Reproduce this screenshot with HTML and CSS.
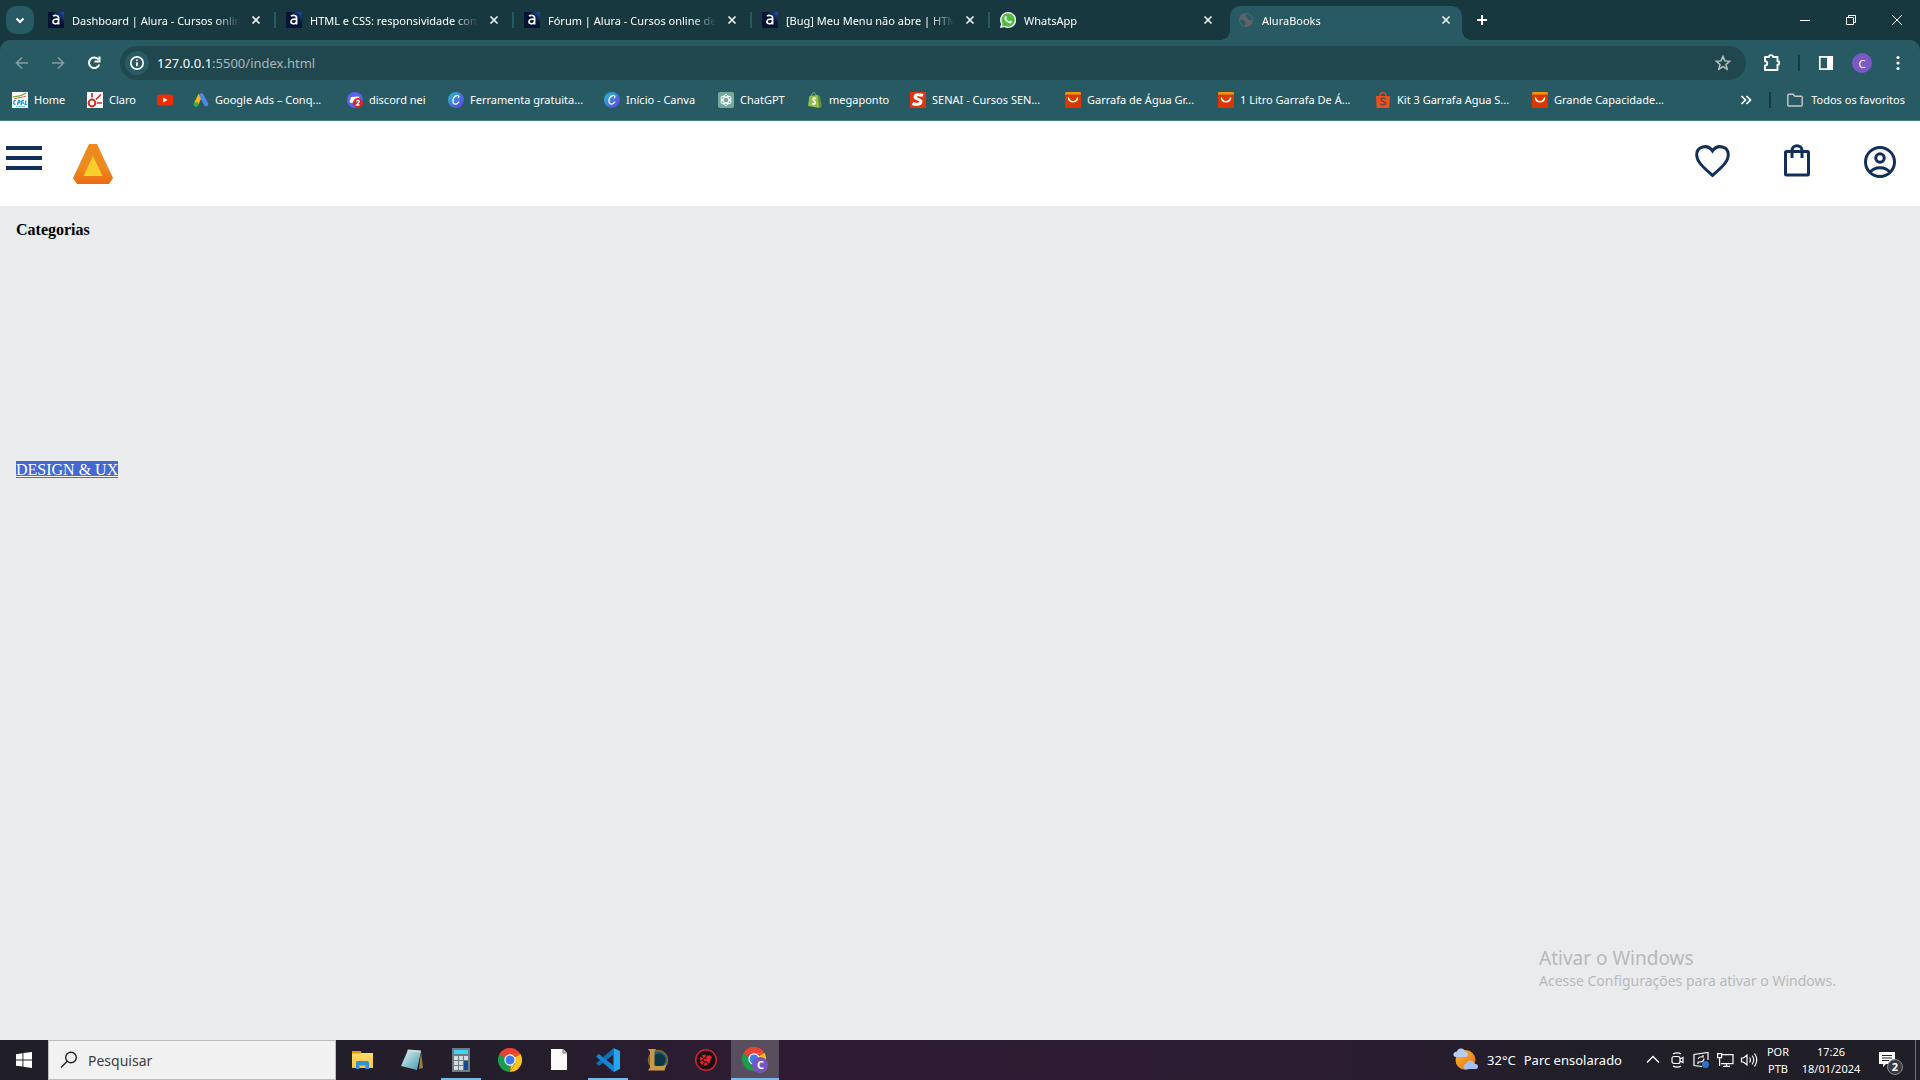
FILE: index.html
```html
<!DOCTYPE html>
<html lang="pt-BR">
<head>
<meta charset="utf-8">
<title>AluraBooks</title>
<link rel="stylesheet" href="styles.css">
</head>
<body>
<svg class="defs" aria-hidden="true">
  <defs>
    <linearGradient id="g-alura" x1="0" y1="1" x2="1" y2="0"><stop offset=".6" stop-color="#051433"/><stop offset="1" stop-color="#2450a8"/></linearGradient>
    <linearGradient id="g-canva" x1="0" y1="0" x2="1" y2="1"><stop offset="0" stop-color="#1fc3cc"/><stop offset="1" stop-color="#6a35ea"/></linearGradient>
    <linearGradient id="g-logo" x1="0" y1="0" x2="0" y2="1"><stop offset=".6" stop-color="#ee8a1d"/><stop offset="1" stop-color="#ea6a14"/></linearGradient>
    <linearGradient id="g-folder" x1="0" y1="0" x2="0" y2="1"><stop offset="0" stop-color="#ffe07a"/><stop offset="1" stop-color="#fbc43c"/></linearGradient>
    <linearGradient id="g-note" x1="0" y1="0" x2="1" y2="1"><stop offset="0" stop-color="#e8f6f8"/><stop offset="1" stop-color="#3f98ab"/></linearGradient>
    <linearGradient id="g-sun" x1="0" y1="0" x2="1" y2="1"><stop offset="0" stop-color="#fbbf24"/><stop offset="1" stop-color="#e8661b"/></linearGradient>
  </defs>
  <symbol id="i-alura" viewBox="0 0 16 16"><path d="M0 0h16v16H0z" fill="url(#g-alura)"/><path d="M5 4.200C6.500 3 10.600 3 10.600 6v6.600M10.400 7.400C7 6.700 5 7.700 5 9.800c0 2.600 4.500 2.600 5.400.2" fill="none" stroke="#fff" stroke-width="1.700"/></symbol>
  <symbol id="i-whats" viewBox="0 0 16 16"><path d="M8 0a8 8 0 1 1-3.700 15L0 16l1.100-4A8 8 0 0 1 8 0z" fill="#fff"/><path d="M8 1.300a6.700 6.700 0 1 1-3.400 12.400l-2.700.6.700-2.600A6.700 6.700 0 0 1 8 1.300z" fill="#4dbd3f"/><path d="M5.200 4.200c.8-.6 1.200 0 1.700 1.500L6.300 6.700c.7 1.300 1.600 2.100 2.900 2.700l1-.9c1.500.6 2 .9 1.700 1.600-.8 2-3.300 1.500-5.300-.3C4.600 8 3.600 5.600 5.200 4.200z" fill="#fff"/></symbol>
  <symbol id="i-globe" viewBox="0 0 16 16"><circle cx="8" cy="8" r="7" fill="#5f6368"/><path d="M2 8c3-.5 4 .5 5 1.500 1 1 1 1 .5 2L7 14c-3-.4-5-3-5-6zM8 2c-1 1.500-.5 2.500.5 3C10 5.500 9 7 10.500 8H14c0-3-2.500-6-6-6z" fill="#285a63"/></symbol>
  <symbol id="i-x" viewBox="0 0 16 16"><path d="M4.500 4.500l7 7m0-7l-7 7" stroke="#eef4f4" stroke-width="1.700"/></symbol>
  <symbol id="i-ali" viewBox="0 0 16 16"><rect width="16" height="16" rx="1.500" fill="#d93900"/><path d="M0 2.500V1.500A1.500 1.500 0 0 1 1.500 0h13A1.500 1.500 0 0 1 16 1.500V2.500z" fill="#f09a00"/><path d="M3.500 6c1 5 8 5 9 0" fill="none" stroke="#fff" stroke-width="1.500" stroke-linecap="round"/></symbol>
  <symbol id="i-canva" viewBox="0 0 16 16"><circle cx="8" cy="8" r="8" fill="url(#g-canva)"/><path d="M10.500 5.800c.9-1.600-.3-2.600-1.600-2.300C6 4 4 7.700 5.200 10.600c1 2.400 4 2 5.500-.6" fill="none" stroke="#fff" stroke-width="1.300" stroke-linecap="round"/></symbol>
  <symbol id="i-chrome" viewBox="0 0 24 24"><path d="M12 12 1.600 6a12 12 0 0 1 20.800 0z" fill="#ea4335"/><path d="M12 12 1.600 6A12 12 0 0 0 12 24z" fill="#1d9a4c"/><path d="M12 12 22.400 6A12 12 0 0 1 12 24l5.200-9z" fill="#fcc31e"/><path d="M12 6.500h10.600L22.400 6H12zM12 24l5-9-4.500 2.500z" fill="#fcc31e"/><path d="M1.600 6l5.600 9.400L12 17.500V12z" fill="#1d9a4c"/><path d="M1.600 6A12 12 0 0 1 22.400 6.600H12L7 10z" fill="#ea4335"/><circle cx="12" cy="12" r="5.700" fill="#fff"/><circle cx="12" cy="12" r="4.500" fill="#3b7ded"/></symbol>
</svg>

<header class="chrome">
  <div class="tabstrip">
    <button class="tab-search" aria-label="Pesquisar guias"><svg width="28" height="28" fill="none" stroke="#fff" stroke-width="2"><path d="M10.500 12.500l3.500 3.500 3.500-3.500"/></svg></button>
    <nav class="tabs">
      <div class="tab"><svg class="fav"><use href="#i-alura"/></svg><span class="tab-title">Dashboard | Alura - Cursos online de tecnologia</span><button class="tab-close" aria-label="Fechar"><svg class="fav"><use href="#i-x"/></svg></button></div>
      <div class="tab"><svg class="fav"><use href="#i-alura"/></svg><span class="tab-title">HTML e CSS: responsividade com mobile-first</span><button class="tab-close" aria-label="Fechar"><svg class="fav"><use href="#i-x"/></svg></button></div>
      <div class="tab"><svg class="fav"><use href="#i-alura"/></svg><span class="tab-title">Fórum | Alura - Cursos online de tecnologia</span><button class="tab-close" aria-label="Fechar"><svg class="fav"><use href="#i-x"/></svg></button></div>
      <div class="tab"><svg class="fav"><use href="#i-alura"/></svg><span class="tab-title">[Bug] Meu Menu não abre | HTML e CSS</span><button class="tab-close" aria-label="Fechar"><svg class="fav"><use href="#i-x"/></svg></button></div>
      <div class="tab tab-last"><svg class="fav"><use href="#i-whats"/></svg><span class="tab-title">WhatsApp</span><button class="tab-close" aria-label="Fechar"><svg class="fav"><use href="#i-x"/></svg></button></div>
      <div class="tab tab-active"><svg class="fav"><use href="#i-globe"/></svg><span class="tab-title">AluraBooks</span><button class="tab-close" aria-label="Fechar"><svg class="fav"><use href="#i-x"/></svg></button></div>
    </nav>
    <button class="new-tab" aria-label="Nova guia"><svg width="12" height="12" stroke="#fff" stroke-width="2"><path d="M6 1v10M1 6h10"/></svg></button>
    <div class="window-controls">
      <button aria-label="Minimizar"><svg width="12" height="12" stroke="#fff"><path d="M1 6.500h10"/></svg></button>
      <button aria-label="Restaurar"><svg width="12" height="12" fill="none" stroke="#fff"><path d="M1.500 3.500h7v7h-7zM3.500 3.500v-2h7v7h-2"/></svg></button>
      <button aria-label="Fechar janela"><svg width="12" height="12" stroke="#fff"><path d="M1 1l10 10M11 1L1 11"/></svg></button>
    </div>
  </div>

  <div class="toolbar">
    <button class="nav-btn dim" aria-label="Voltar"><svg width="16" height="16" fill="none" stroke="currentColor" stroke-width="1.700"><path d="M14 8H3M8 2.500L2.500 8 8 13.500"/></svg></button>
    <button class="nav-btn dim" aria-label="Avançar"><svg width="16" height="16" fill="none" stroke="currentColor" stroke-width="1.700"><path d="M2 8h11M8 2.500L13.500 8 8 13.500"/></svg></button>
    <button class="nav-btn" aria-label="Recarregar"><svg width="16" height="16" fill="none" stroke="currentColor" stroke-width="2"><path d="M12.500 4.500A5.300 5.300 0 1 0 13.300 9.500M13.500 1.500v5h-5"/></svg></button>
    <div class="omnibox">
      <button class="site-info" aria-label="Informações do site"><svg width="16" height="16" fill="none" stroke="#fff" stroke-width="1.700"><circle cx="8" cy="8" r="6.200"/><path d="M8 7.200v4M8 4.500v1.600"/></svg></button>
      <span class="url"><b>127.0.0.1</b>:5500/index.html</span>
      <button class="star" aria-label="Favoritar"><svg width="18" height="18" fill="none" stroke="#b9c4c6" stroke-width="1.500"><path d="M9 2.500l1.900 4.400 4.700.4-3.600 3.100 1.100 4.700L9 12.600l-4.100 2.500L6 10.400 2.400 7.300l4.700-.4z"/></svg></button>
    </div>
    <div class="actions">
      <button aria-label="Extensões"><svg width="16" height="20" viewBox="2 0 16 20" fill="none" stroke="#fff" stroke-width="1.900"><path d="M3 4h4c0-2.500 4-2.500 4 0h4.500v4.200c2.500 0 2.500 3.600 0 3.600V17H3v-4.500c3 0 3-4.200 0-4.200z" stroke-linejoin="round"/></svg></button>
      <i class="divider"></i>
      <button aria-label="Painel lateral"><svg width="16" height="16"><path d="M1.800 1.800h12.400v12.400H1.800z" fill="none" stroke="#fff" stroke-width="1.700"/><path d="M9 2h5v12H9z" fill="#fff"/></svg></button>
      <button class="avatar" aria-label="Perfil">C</button>
      <button class="more" aria-label="Menu"><svg width="4" height="16" fill="#fff"><circle cx="2" cy="2.500" r="1.600"/><circle cx="2" cy="8" r="1.600"/><circle cx="2" cy="13.500" r="1.600"/></svg></button>
    </div>
  </div>

  <div class="bookmarks">
    <nav class="bookmark-list">
      <a href="#"><svg class="fav" viewBox="0 0 16 16"><path d="M0 0h16v16H0z" fill="#fff"/><path d="M1 5c5-1 9-1 13-4" stroke="#7ab648" stroke-width="1.500" fill="none"/><path d="M2 7c5-2 8-1 12-3" stroke="#e8632b" fill="none"/><path d="M4 8.500C1 8 1 12.500 3.500 12.500M5.500 13l1-4.500c2.500-.5 2 2.500-.5 2.500M9 13l1-4.500h2M9.500 11H12M14 8.500l-1 4h2" stroke="#1b9bd8" stroke-width="1.300" fill="none"/><path d="M4 14.700h9" stroke="#69bfe8"/></svg><span>Home</span></a>
      <a href="#"><svg class="fav" viewBox="0 0 16 16"><path d="M0 0h16v16H0z" fill="#fff"/><g stroke="#d52b1e" fill="none" stroke-width="1.700"><circle cx="5" cy="11" r="3.400" stroke-width="2"/><path d="M5 1v4.500M9 7.500L14 2.500M10 11h5"/></g></svg><span>Claro</span></a>
      <a href="#" aria-label="YouTube"><svg class="fav" viewBox="0 0 16 16"><rect y="2.500" width="16" height="11" rx="2.500" fill="#f02d00"/><path d="M6.200 5.500v5l4.300-2.500z" fill="#fff"/></svg></a>
      <a href="#"><svg class="fav" viewBox="0 0 16 16"><path d="M7.500 3L3 12" stroke="#fbbc04" stroke-width="4.500"/><path d="M8.500 3.500L13 12" stroke="#4f86ec" stroke-width="4.500" stroke-linecap="round"/><circle cx="3" cy="12.500" r="2.400" fill="#3fa653"/></svg><span>Google Ads – Conq...</span></a>
      <a href="#"><svg class="fav" viewBox="0 0 16 16"><circle cx="8" cy="8" r="8" fill="#5865f2"/><path d="M4 5l8-.5 1.500 6L10 9l-2 1-4 1-1.500-1z" fill="#fff"/><circle cx="11" cy="11" r="5" fill="#d22525"/><path d="M9.500 9.500c.5-1.800 3.200-1.200 2.700.5L9.500 13h3" stroke="#fff" stroke-width="1.300" fill="none"/></svg><span>discord nei</span></a>
      <a href="#"><svg class="fav"><use href="#i-canva"/></svg><span>Ferramenta gratuita...</span></a>
      <a href="#"><svg class="fav"><use href="#i-canva"/></svg><span>Início - Canva</span></a>
      <a href="#"><svg class="fav" viewBox="0 0 16 16"><rect width="16" height="16" rx="2" fill="#75a99c"/><g fill="none" stroke="#fff" stroke-width=".9"><ellipse cx="8" cy="8" rx="2.700" ry="5.500"/><ellipse cx="8" cy="8" rx="2.700" ry="5.500" transform="rotate(60 8 8)"/><ellipse cx="8" cy="8" rx="2.700" ry="5.500" transform="rotate(120 8 8)"/></g></svg><span>ChatGPT</span></a>
      <a href="#"><svg class="fav" viewBox="0 0 16 16"><path d="M2.500 4L11 3l1.500 13L1 14z" fill="#95bf47"/><path d="M11 3l2 1.200L15 15l-3 1z" fill="#5e8e3e"/><path d="M4.500 4c.5-4.500 4-4 4.500-.5" fill="none" stroke="#95bf47"/><path d="M9 6.500c-2-1-3.500.5-2.500 1.700C8 9.500 9 9.700 8 11.500c-.8 1-2.500.5-3 0" stroke="#fff" stroke-width="1.600" fill="none"/></svg><span>megaponto</span></a>
      <a href="#"><svg class="fav" viewBox="0 0 16 16"><path d="M0 0h16v16H0z" fill="#e8320b"/><path d="M13 3.500C9 2 5 2.500 5 5c0 2.500 6.500 2 6 5-.3 2.500-5 3-8.500 1.500" stroke="#fff" stroke-width="3" fill="none"/></svg><span>SENAI - Cursos SEN...</span></a>
      <a href="#"><svg class="fav"><use href="#i-ali"/></svg><span>Garrafa de Água Gr...</span></a>
      <a href="#"><svg class="fav"><use href="#i-ali"/></svg><span>1 Litro Garrafa De Á...</span></a>
      <a href="#"><svg class="fav" viewBox="0 0 16 16"><path d="M1 4h14l-.7 12H1.700z" fill="#ea501f"/><path d="M5 4c0-4.500 6-4.500 6 0" fill="none" stroke="#ea501f" stroke-width="1.200"/><path d="M10.500 7c-2-1.500-4.500-1-4.500.8 0 2 4.500 1.500 4.500 3.500 0 2-3 2-5 .7" stroke="#574a43" stroke-width="1.400" fill="none"/></svg><span>Kit 3 Garrafa Agua S...</span></a>
      <a href="#"><svg class="fav"><use href="#i-ali"/></svg><span>Grande Capacidade...</span></a>
    </nav>
    <button class="overflow" aria-label="Mais favoritos"><svg width="12" height="12" fill="none" stroke="#fff" stroke-width="1.700"><path d="M1.500 2l4 4-4 4M6.500 2l4 4-4 4"/></svg></button>
    <i class="divider"></i>
    <a class="all-bookmarks" href="#"><svg class="fav" viewBox="0 0 16 16" fill="none" stroke="#c5c9ca" stroke-width="1.400"><path d="M.8 13V3.200q0-1 1-1H6l2 2h6.200q1 0 1 1V13q0 1-1 1H1.800q-1 0-1-1z"/></svg><span>Todos os favoritos</span></a>
  </div>
</header>

<div class="site">
  <header class="site-header">
    <button class="burger" aria-label="Menu"><span></span><span></span><span></span></button>
    <a class="logo" href="#" aria-label="AluraBooks"><svg width="40" height="40"><path d="M16 0h8l16 34-4 6H4l-4-6z" fill="url(#g-logo)"/><path d="M20 12l9.500 20h-19z" fill="#f8cf2b"/></svg></a>
    <nav class="site-nav">
      <a href="#" aria-label="Favoritos"><svg width="36" height="36" viewBox="0 1 36 36" fill="none" stroke="#123057" stroke-width="3"><path d="M18.500 32.500C9.500 24.500 2.700 19 2.700 11.500 2.700 3.500 13.500.5 18.500 8 23.500.5 34.300 3.500 34.300 11.500 34.300 19 27.500 24.500 18.500 32.500z"/></svg></a>
      <a href="#" aria-label="Sacola"><svg width="36" height="36" viewBox="-1 1 36 36" fill="none" stroke="#123057" stroke-width="3"><rect x="6.500" y="8.500" width="23" height="23.500" rx="1"/><path d="M13 15V7.500c0-6.500 10-6.500 10 0V15"/></svg></a>
      <a href="#" aria-label="Perfil"><svg width="36" height="36" viewBox="0 1 36 36" fill="none" stroke="#123057" stroke-width="3"><circle cx="18" cy="19" r="14.500"/><circle cx="18" cy="15" r="4.200"/><path d="M8 29.500c4-6.500 16-6.500 20 0"/></svg></a>
    </nav>
  </header>
  <main class="menu">
    <h1>Categorias</h1>
    <a href="#">DESIGN &amp; UX</a>
  </main>
  <aside class="watermark"><strong>Ativar o Windows</strong><span>Acesse Configurações para ativar o Windows.</span></aside>
</div>

<footer class="taskbar">
  <button class="start" aria-label="Iniciar"><svg width="16" height="16" fill="#fff"><path d="M0 2.200L6.500 1.300v6.200H0zM7.400 1.100L16 0v7.500H7.400zM0 8.400h6.500v6.200L0 13.800zM7.400 8.400H16V16l-8.600-1.200z"/></svg></button>
  <label class="search"><svg width="18" height="18" fill="none" stroke="#222" stroke-width="1.400"><circle cx="11" cy="6.500" r="5.300"/><path d="M7 10.500L1 16.500"/></svg><input type="text" placeholder="Pesquisar" aria-label="Pesquisar"></label>
  <nav class="apps">
    <button class="app" aria-label="Explorador"><svg width="24" height="24"><path d="M1 3h8l1.500 2H22v15H1z" fill="url(#g-folder)"/><path d="M1 3h9v2.500H1z" fill="#e39b0b"/><path d="M5 21v-6.500q0-1.500 1.500-1.500h10q1.500 0 1.500 1.500V21h-3.500v-3.500h-6V21z" fill="#3293d8"/></svg></button>
    <button class="app" aria-label="Bloco de notas"><svg width="24" height="24"><path d="M21 3l2 17-4 1z" fill="#9b7a3f"/><path d="M8 2l13 1-4 19-16-4z" fill="url(#g-note)"/><path d="M8 1.500l13 1-.5 2-13.500-1z" fill="#d5dadb"/></svg></button>
    <button class="app app-open" aria-label="Calculadora"><svg width="24" height="24"><path d="M3 0h18v24H3z" fill="#6f7b83"/><path d="M5 2h14v4H5z" fill="#41d2f4"/><path d="M5 8h4v4H5zM10 8h4v4h-4zM15 8h4v4h-4zM5 13h4v4H5zM10 13h4v4h-4zM5 18h4v4H5zM10 18h4v4h-4z" fill="#d6dcde"/><path d="M15 13h4v9h-4z" fill="#114b91"/></svg></button>
    <button class="app" aria-label="Chrome"><svg width="24" height="24"><use href="#i-chrome"/></svg></button>
    <button class="app" aria-label="Documento"><svg width="24" height="24"><path d="M4 1h12l4 4v17H4z" fill="#fafafa"/><path d="M16 1v4h4" fill="#ccc" stroke="#777"/></svg></button>
    <button class="app app-open" aria-label="VS Code"><svg width="24" height="24"><path d="M17.500 0L24 3v18l-6.500 3z" fill="#25a5f0"/><path d="M18 6L3 18 0 15.500 17.500 0z" fill="#0d6fb8"/><path d="M18 18L3 6 0 8.500 17.500 24z" fill="#1686cf"/></svg></button>
    <button class="app" aria-label="League of Legends"><svg width="24" height="24"><circle cx="13" cy="12" r="9.500" fill="#10657a" stroke="#8d6a2d" stroke-width="1.500"/><circle cx="14" cy="12" r="6.500" fill="#0e3542"/><path d="M3 1h8l-1.500 2.500V18h9l3-2-2 6.500H3l2-3V4z" fill="#c9994a"/></svg></button>
    <button class="app" aria-label="Jogo"><svg width="24" height="24"><circle cx="12" cy="12" r="10.300" fill="#171014" stroke="#d2222d" stroke-width="1.500"/><circle cx="11" cy="12" r="4" fill="none" stroke="#e5242e" stroke-width="3" stroke-dasharray="3 1"/><path d="M11 12l5-5 2 2-4 5z" fill="#e5242e"/><circle cx="11" cy="12" r="1.500" fill="#e5242e"/></svg></button>
    <button class="app app-open app-current" aria-label="Chrome, perfil C"><svg width="26" height="26"><use href="#i-chrome" width="24" height="24"/><circle cx="18" cy="18" r="8" fill="#7854bd"/></svg><span class="app-badge">C</span></button>
  </nav>
  <div class="tray">
    <button class="weather"><svg width="26" height="24"><circle cx="12.500" cy="12" r="10" fill="url(#g-sun)"/><path d="M3 9q-3-.5-2.500-3T4 3.500Q5 0 8.500.5T12 4q3 0 3 2.500T12 9z" fill="#b5cdf5"/><path d="M13 21q-3-.5-2.500-3t3-2.500q1-3 4-3t4 3.500q3.500-.5 3.500 2.500T22 21z" fill="#a2c1f2"/></svg><span>32°C</span><span>Parc ensolarado</span></button>
    <div class="tray-icons">
      <button aria-label="Mostrar ícones"><svg width="16" height="16" fill="none" stroke="#fff" stroke-width="1.300"><path d="M2 10.500l6-6 6 6"/></svg></button>
      <button aria-label="Reunir agora"><svg width="16" height="16" fill="none" stroke="#fff" stroke-width="1.200"><rect x="3" y="4.500" width="8" height="7" rx="2"/><path d="M11 7l3-1.500v5L11 9M4 2q4-2.200 8 0M4 14q4 2.200 8 0"/></svg></button>
      <button aria-label="Atualização"><svg width="18" height="18" fill="none" stroke="#fff" stroke-width="1.200"><path d="M10 15.500L2 14.500V3.500L16 1.500V9M6 8q1-3 5-2V4M12 7.500q0 3-4 3.500H6v2"/><circle cx="13.500" cy="13.500" r="3.600" fill="#2b74c7" stroke="none"/></svg></button>
      <button aria-label="Rede"><svg width="18" height="16" fill="none" stroke="#fff" stroke-width="1.200"><path d="M5 2.600h12v9H5M1.600 1.600h4v4h-4zM3.600 6v8M7 14.400h7M10.500 12v2"/></svg></button>
      <button aria-label="Volume"><svg width="18" height="16" fill="none" stroke="#fff" stroke-width="1.200"><path d="M1.500 6v4h2l3.500 3V3L3.500 6zM9.500 5.500q2 2.500 0 5M12 3.500q3.500 4.500 0 9M14.500 1.500q4.500 6.500 0 13"/></svg></button>
    </div>
    <button class="stack language"><span>POR</span><span>PTB</span></button>
    <button class="stack clock"><span>17:26</span><span>18/01/2024</span></button>
    <button class="notifications" aria-label="Notificações"><svg width="18" height="18"><path d="M1 1h16v12H8l-3 3v-3H1z" fill="#fff"/><path d="M4 4.500h10M4 7h10M4 9.500h7" stroke="#211f27" stroke-width="1.200"/></svg><span class="count">2</span></button>
  </div>
</footer>
</body>
</html>
```
FILE: styles.css
```css
* { box-sizing: border-box; }

body {
  margin: 0;
  min-height: 100vh;
  display: flex;
  flex-direction: column;
  font-family: "Noto Sans", "Open Sans", sans-serif;
  font-size: 11px;
  color: #fff;
}

button {
  padding: 0;
  border: 0;
  background: none;
  color: inherit;
  font: inherit;
  display: flex;
  align-items: center;
  justify-content: center;
}

a { color: inherit; }
svg { display: block; flex: none; }
.defs { position: absolute; width: 0; height: 0; }
.fav { width: 16px; height: 16px; }
.divider { width: 2px; height: 16px; background: #18383f; }

/* Tab strip */
.chrome { background: #18383f; border-bottom: 1px solid #4c8089; }
.tabstrip { display: flex; height: 40px; }
.tab-search {
  width: 28px;
  height: 28px;
  margin: 6px 3px 6px 6px;
  border-radius: 10px;
  background: #285a63;
}
.tabs { display: flex; flex: 0 1 1428px; min-width: 0; }
.tab {
  position: relative;
  flex: 1 1 0;
  min-width: 0;
  display: flex;
  align-items: center;
  gap: 8px;
  padding: 0 11px;
}
.tab::after {
  content: "";
  position: absolute;
  right: -1px;
  top: 12px;
  width: 2px;
  height: 16px;
  background: #285a63;
}
.tab-last::after { display: none; }
.tab-title {
  flex: 1;
  overflow: hidden;
  white-space: nowrap;
  mask-image: linear-gradient(to right, #000 calc(100% - 24px), transparent);
}
.tab-active { z-index: 1; }
.tab-active::before {
  content: "";
  position: absolute;
  z-index: -1;
  inset: 6px 3px 0;
  border-radius: 10px 10px 0 0;
  background: #285a63;
}
.tab-active::after {
  z-index: -1;
  left: -7px;
  right: -7px;
  top: 30px;
  width: auto;
  height: 10px;
  background:
    radial-gradient(circle at 0 0, transparent 10px, #285a63 10px) left / 10px 10px no-repeat,
    radial-gradient(circle at 100% 0, transparent 10px, #285a63 10px) right / 10px 10px no-repeat;
}
.new-tab { width: 34px; }
.window-controls { display: flex; margin-left: auto; }
.window-controls button { width: 46px; }

/* Toolbar */
.toolbar {
  display: flex;
  align-items: center;
  padding: 6px 14px 0 4px;
  background: #285a63;
  border-radius: 10px 10px 0 0;
}
.nav-btn { width: 36px; height: 34px; }
.nav-btn.dim { color: #7f9da2; }
.omnibox {
  flex: 1;
  display: flex;
  align-items: center;
  height: 34px;
  margin-left: 8px;
  padding: 0 14px 0 5px;
  border-radius: 17px;
  background: #21474e;
}
.site-info { width: 24px; height: 24px; border-radius: 50%; background: #285a63; }
.url { flex: 1; margin-left: 8px; font-size: 13px; color: #a5b7ba; }
.url b { font-weight: 400; color: #fff; }
.actions { display: flex; align-items: center; gap: 18px; padding-left: 18px; }
.avatar {
  width: 20px;
  height: 20px;
  border-radius: 50%;
  background: #7b59c4;
}
.more { width: 16px; }

/* Bookmarks bar */
.bookmarks {
  display: flex;
  align-items: center;
  height: 40px;
  padding: 0 15px 1px 12px;
  background: #285a63;
  white-space: nowrap;
}
.bookmarks a { display: flex; align-items: center; gap: 6px; text-decoration: none; }
.bookmark-list {
  flex: 1;
  min-width: 0;
  overflow: hidden;
  display: grid;
  grid-template-columns: 75px 70px 36px 154px 101px 156px 114px 89px 103px 155px 153px 157px 157px auto;
}
.overflow { width: 16px; margin-right: 15px; }
.bookmarks .all-bookmarks { margin-left: 16px; gap: 8px; }

/* Page content */
.site {
  position: relative;
  flex: 1;
  background: #eaebed;
  color: #000;
  font-family: "Liberation Serif", "Times New Roman", serif;
  font-size: 16px;
}
.site-header {
  display: flex;
  align-items: flex-start;
  height: 85px;
  padding: 23px 22px 0 6px;
  background: #fff;
}
.burger { flex-direction: column; gap: 6px; margin: 2px 31px 0 0; }
.burger span { width: 36px; height: 4px; background: #123057; }
.site-nav { display: flex; gap: 48px; margin-left: auto; }
.menu { padding: 15px 16px; }
.menu h1 { margin: 0 0 222px; font-size: 16px; line-height: 18px; }
.menu a {
  display: inline-block;
  line-height: 17px;
  background: #4469d3;
  color: #fff;
}
.watermark {
  position: absolute;
  right: 80px;
  bottom: 49px;
  display: flex;
  flex-direction: column;
  width: 301px;
  font: 14px/20px "Noto Sans", "Open Sans", sans-serif;
  white-space: nowrap;
  color: #b8b9bb;
}
.watermark strong { font-size: 19px; font-weight: 400; line-height: 26px; }

/* Taskbar */
.taskbar {
  display: flex;
  height: 40px;
  background: linear-gradient(to right, #201f28, #241e2b 25%, #2f1b34 42%, #2a1c31 70%, #211f28 82%, #201f27);
}
.start { width: 48px; }
.search {
  display: flex;
  align-items: center;
  gap: 10px;
  width: 288px;
  padding-left: 11px;
  background: #f1f1f1;
  border: 1px solid #bdbdbd;
}
.search input {
  flex: 1;
  min-width: 0;
  padding: 0;
  border: 0;
  outline: 0;
  background: none;
  font: 14px "Noto Sans", "Open Sans", sans-serif;
}
.search input::placeholder { color: #3d3d3d; }
.apps { display: flex; gap: 1px; margin-left: 3px; }
.app { position: relative; width: 48px; }
.app-open::after {
  content: "";
  position: absolute;
  left: 4px;
  right: 4px;
  bottom: 0;
  height: 2px;
  background: #76b9ed;
}
.app-current { background: #594e5d; }
.app-current::after { left: 0; right: 0; }
.app-badge { position: absolute; left: 26px; top: 17px; font-weight: 700; line-height: 16px; }
.tray { display: flex; margin-left: auto; padding-right: 4px; }
.weather { gap: 8px; margin-right: 19px; font-size: 13px; }
.tray-icons { display: flex; }
.tray-icons button { width: 24px; }
.stack { flex-direction: column; line-height: 17px; }
.language { width: 34px; }
.clock { width: 72px; }
.notifications {
  position: relative;
  width: 49px;
  padding-right: 8px;
  border-right: 1px solid #77757b;
}
.count {
  position: absolute;
  left: 20px;
  top: 19px;
  width: 16px;
  height: 16px;
  border: 1px solid #8c8b8f;
  border-radius: 50%;
  background: #3a393f;
  font-weight: 700;
  line-height: 14px;
}
```
